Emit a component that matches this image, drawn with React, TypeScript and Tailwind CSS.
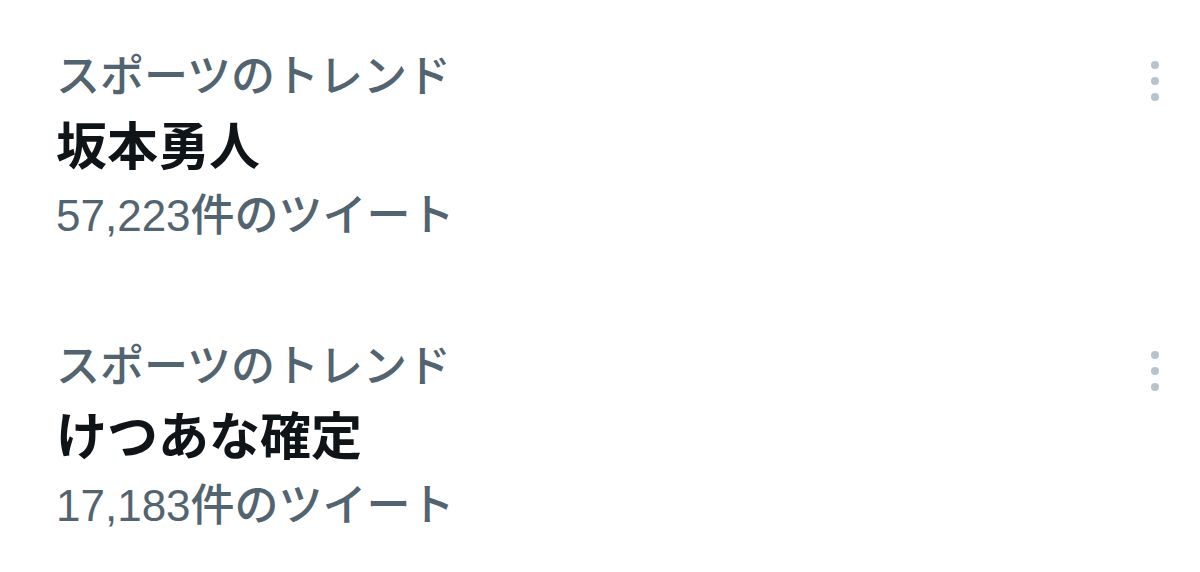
type Trend = {
  category: string;
  name: string;
  count: string;
};

const TRENDS: Trend[] = [
  { category: "スポーツのトレンド", name: "坂本勇人", count: "57,223件のツイート" },
  { category: "スポーツのトレンド", name: "けつあな確定", count: "17,183件のツイート" },
];

function MoreDots() {
  return (
    <div className="flex flex-col items-center gap-[8px] pt-[16px]">
      <span className="h-[8px] w-[8px] rounded-full bg-[#b6c3cd]" />
      <span className="h-[8px] w-[8px] rounded-full bg-[#b6c3cd]" />
      <span className="h-[8px] w-[8px] rounded-full bg-[#b6c3cd]" />
    </div>
  );
}

function TrendRow({ trend }: { trend: Trend }) {
  return (
    <div className="flex items-start justify-between">
      <div className="flex flex-col">
        <div className="text-[44px] font-medium leading-[64px] text-[#536471]">{trend.category}</div>
        <div className="text-[51px] font-bold leading-[78px] text-[#0f1419]">{trend.name}</div>
        <div className="text-[44px] font-medium leading-[58px] text-[#536471]">{trend.count}</div>
      </div>
      <MoreDots />
    </div>
  );
}

export default function App() {
  return (
    <div
      className="flex h-[572px] w-[1200px] flex-col gap-[90px] bg-white pl-[56px] pr-[41px] pt-[45px]"
      style={{ fontFamily: '"Liberation Sans", "Noto Sans CJK JP", sans-serif' }}
    >
      {TRENDS.map((t) => (
        <TrendRow key={t.name} trend={t} />
      ))}
    </div>
  );
}
